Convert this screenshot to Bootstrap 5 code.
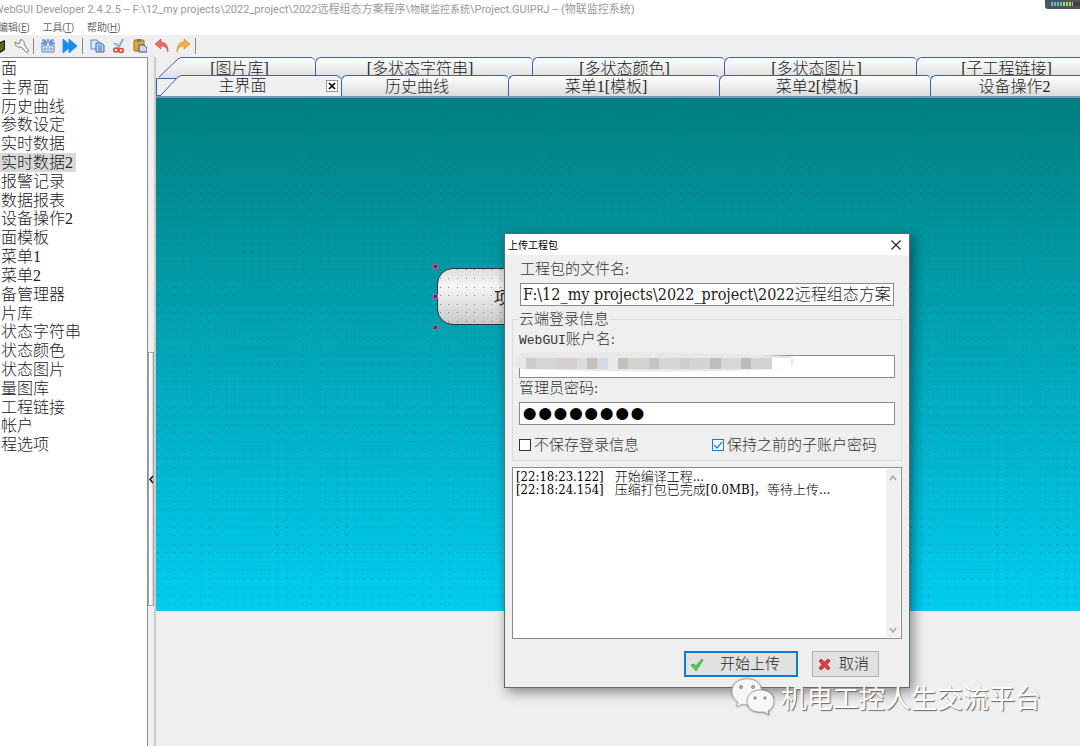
<!DOCTYPE html>
<html lang="zh-CN">
<head>
<meta charset="utf-8">
<meta name="viewport" content="width=device-width, initial-scale=1">
<title>WebGUI Developer 2.4.2.5</title>
<link href="https://cdn.jsdelivr.net/npm/bootstrap@5.3.0/dist/css/bootstrap.min.css" rel="stylesheet">
<style>
  :root { --song: "Liberation Serif", "Noto Sans CJK SC", serif; --face: #efefef; --edge: #3a62b4; }
  body { font: 300 16px/19px var(--song); color: #222; background: var(--face); overflow: hidden; }
  button { font: inherit; color: inherit; }
  .ui-text { font: 11px/16px "Open Sans", "Noto Sans CJK SC", sans-serif; }
  .title-line { height: 20px; color: #999; padding-top: 2px; margin-left: -6px; }
  .title-line h1 { font: 11px/16px Roboto, "Noto Sans CJK SC", sans-serif; }
  .title-line .sys { font-size: 10px; }
  .menu-line { height: 15px; gap: 13px; margin-left: -2px; }
  .menu-line a { color: #666; font-size: 10px; text-decoration: none; line-height: 15px; }
  .tool-line { height: 22px; padding-bottom: 1px; }
  .tool-line button, .plain-btn { border: 0; background: none; padding: 0; line-height: 0; }
  .tool-line .vr { height: 16px; align-self: center; background: #888; opacity: 1; }
  .tool-group { gap: 7px; margin: 0 5px 0 7px; }
  .meter { position: absolute; right: 0; top: 0; }

  .side { width: 148px; background: #fff; border-right: 1px solid #888d96; border-top: 1px solid #888d96; }
  .side ul { height: 396px; display: grid; grid-auto-rows: 1fr; padding: 1px 0 0 1px; }
  .side li { min-height: 0; }
  .side a { color: #222; text-decoration: none; display: block; width: fit-content; padding-right: 3px; line-height: 19px; }
  .side a.active { background: #d9d9d9; box-shadow: -1px 0 #d9d9d9; }
  .splitter { width: 8px; padding-top: 295px; border-right: 2px solid #ccc; }
  .grip { height: 254px; width: 6px; border: 1px solid #a5a5a5; background: linear-gradient(90deg, #fff 50%, #bcd8ee); }

  .tab-row { margin-right: -40px; }
  .tab-row button { position: relative; flex-shrink: 0; padding: 0; border: solid var(--edge); border-width: 1px 0 0 1px; border-radius: 6px 4px 0 0;
    background: linear-gradient(#fff, #dcdcdc); line-height: 21px; overflow: hidden; }
  .row-back { height: 18px; }
  .row-back button { height: 22px; }
  .row-front { height: 23px; position: relative; border-bottom: 2px solid #7a92bd; }
  .row-front button { height: 21px; line-height: 20px; padding-top: 1px; }
  .tab-row .slanted { border: 0; border-radius: 0; background: none; }
  .slanted svg { position: absolute; left: 0; top: 0; }
  .slanted span { position: relative; }
  .w-160 { width: 159px; } .w-217 { width: 217px; } .w-192 { width: 192px; } .w-185 { width: 185px; }
  .w-167 { width: 167px; } .w-211 { width: 211px; } .w-last { width: 184px; }
  .row-front .tab-x { position: absolute; left: 170px; top: 5px; height: 12px; padding: 0; }

  .stage { height: 513px; background: linear-gradient(#008080, #00cdf0); }
  .stage-btn { left: 281px; top: 170px; width: 160px; height: 57px; border: 1px solid #333; border-radius: 16px; padding: 3px 0 0 56px;
    text-align: left; background: linear-gradient(#dedede, #f6f6f6 30%, #c9c9c9); font-size: 17px; font-weight: 400; }
  .over { inset: 0; pointer-events: none; }

  .dlg { left: 504px; top: 233px; width: 406px; height: 455px; background: var(--face); border: 1px solid #5c6b6e;
    box-shadow: 3px 4px 12px rgba(0,0,0,.45); font-size: 15px; }
  .dlg-head { height: 21px; background: #fff; padding: 0 8px 0 3px; }
  .dlg-head h2 { font: 10px/20px "Noto Sans CJK SC", sans-serif; color: #000; }
  .dlg-body { padding: 4px 7px 3px; }
  .dlg label { line-height: 20px; color: #333; }
  .mono { font: 13px/20px "Liberation Mono", monospace; }
  .field { display: block; width: 100%; height: 23px; border: 1px solid #8a8a8a; border-radius: 0; background: #fff; padding: 0 2px; color: #222; }
  .field.path { font: 300 16px/18px "DejaVu Serif Condensed", "Noto Sans CJK SC", serif; padding-bottom: 4px; }
  .field.secret { font: 44px/20px "Liberation Sans", sans-serif; color: #000; }
  .group { border: 1px solid #dcdcdc; padding: 0 6px; height: 152px; margin-top: 3px; }
  .group legend { float: none; width: auto; margin: 0; padding: 0; font-size: 15px; line-height: 20px; color: #333; }
  .ticks { padding: 10px 18px 0 0; }
  .ticks span { gap: 3px; }
  .tick { appearance: none; width: 12px; height: 12px; border: 1px solid #333; background: #fff; margin: 0; }
  .tick:checked { border-color: #1879d0; background: #fff url("data:image/svg+xml,%3Csvg xmlns='http://www.w3.org/2000/svg' viewBox='0 0 10 10'%3E%3Cpath d='M1 5l3 3 5-6' fill='none' stroke='%231879d0' stroke-width='1.2'/%3E%3C/svg%3E"); }
  .log-wrap { border: 1px solid #8a8a8a; height: 172px; background: #fff; margin-top: 6px; padding: 1px; }
  .log-wrap textarea { border: 0; resize: none; overflow: hidden; outline: 0; padding: 1px 2px; color: #000;
    font: 300 13px/13px "DejaVu Serif Condensed", "Noto Sans CJK SC", serif; }
  .scroll-rail { width: 14px; background: #f0f0f0; padding: 6px 0 4px 3px; }
  .acts { gap: 14px; padding: 12px 23px 0 0; }
  .act { height: 26px; border: 1px solid #b0b0b0; background: #e1e1e1; padding: 0 9px 0 5px; }
  .act.main { border: 2px solid #0f7bd8; width: 114px; padding: 0 16px 0 4px; }
  .act.sub { width: 67px; }
  .cover { left: 7px; top: 117px; }

  .sign { left: 731px; top: 678px; color: #fff; font: 26px/38px "Noto Sans CJK SC", sans-serif; text-shadow: 1px 1px 1px #666; gap: 7px; }
  .sign svg { filter: drop-shadow(0 0 1px #777); }
</style>
</head>
<body class="position-relative">
<div class="d-flex flex-column min-vh-100">
  <header class="bg-white ui-text">
    <div class="title-line"><h1 class="m-0 text-nowrap">WebGUI Developer 2.4.2.5 -- F:\12_my projects\2022_project\2022远程组态方案程序\<span class="sys">物联监控系统</span>\Project.GUIPRJ -- (物联监控系统)</h1></div>
    <nav class="menu-line d-flex">
      <a href="#">编辑(<u>E</u>)</a><a href="#">工具(<u>T</u>)</a><a href="#">帮助(<u>H</u>)</a>
    </nav>
    <svg class="meter" width="35" height="10"><path d="M0 0h35v9H3q-3 0-3-3z" fill="#4b5262"/><path d="M6 4h13" stroke="#52c5b0" stroke-width="4" stroke-dasharray="2 1"/><path d="M18 4h10" stroke="#c3cf50" stroke-width="4" stroke-dasharray="2 1"/><path d="M28 4h7" stroke="#333a46" stroke-width="4" stroke-dasharray="2 1"/></svg>
  </header>

  <div class="tool-line d-flex align-items-center" role="toolbar">
    <button aria-label="书"><svg width="6" height="16"><path d="M0 4l5-2v10l-5 3z" fill="#1c1c08"/><path d="M1 5v8M3 4v8" stroke="#a6a43a"/></svg></button>
    <button class="ms-1 ps-1" aria-label="设置"><svg width="15" height="16"><path d="M1 4l3 2 2-1V2c3-1 5 2 4 4l4 6c1 2-1 3-2 2L7 9C4 10 1 8 1 4z" fill="#f4f4f4" stroke="#777"/></svg></button>
    <span class="vr ms-1"></span>
    <div class="tool-group d-flex">
      <button aria-label="编译"><svg width="14" height="16"><path d="M1 4h12v10H1z" fill="#e8f2fc" stroke="#5b86c0"/><path d="M1 11h12M1 8h12M4 9v5M7 9v5M10 9v5" stroke="#6b90c2" stroke-width=".8"/><path d="M1 2h3v3M13 2h-3v3M7 1v3M2 5l2 2 2-2M8 5l2 2 2-2" fill="none" stroke="#2d6fd0" stroke-width="1.200"/></svg></button>
      <button aria-label="运行"><svg width="15" height="16"><path d="M1 1l6 5V1l8 7-8 7v-5l-6 5z" fill="#1d8bea" stroke="#1d8bea" stroke-width=".8"/></svg></button>
    </div>
    <span class="vr"></span>
    <div class="tool-group d-flex">
      <button aria-label="复制"><svg width="15" height="16"><path d="M1 2h6l2 2v7H1z" fill="#dbe8fa" stroke="#5b83c8"/><path d="M6 5h5l3 2v7H6z" fill="#bcd4f5" stroke="#3b67b8"/><path d="M8 8h4M8 10h4M8 12h4" stroke="#4a74c0"/></svg></button>
      <button aria-label="剪切"><svg width="14" height="16"><path d="M2 5l6 4M11 1L6 11" stroke="#8cb0cc" stroke-width="2"/><ellipse cx="4" cy="12" rx="2.200" ry="2" fill="none" stroke="#d9453a" stroke-width="1.600"/><ellipse cx="9" cy="12.500" rx="2.200" ry="2" fill="none" stroke="#d9453a" stroke-width="1.600"/></svg></button>
      <button aria-label="粘贴"><svg width="14" height="16"><rect x="1" y="2" width="10" height="11" rx="1" fill="#e0a936" stroke="#94691c"/><path d="M4 1h4v3H4z" fill="#777"/><path d="M6 7h5l3 3v4H6z" fill="#c9d9ee" stroke="#3d5075"/></svg></button>
      <button aria-label="撤销"><svg width="15" height="16"><path d="M1 6l6-5v3c5 0 7 4 7 10-1-4-3-6-7-6v3z" fill="#ee6a66" stroke="#c9403f" stroke-width=".6"/></svg></button>
      <button aria-label="重做"><svg width="14" height="16"><path d="M14 6L8 1v3c-5 0-7 4-7 10 1-4 3-6 7-6v3z" fill="#f4b342" stroke="#c08325" stroke-width=".6"/></svg></button>
    </div>
    <span class="vr"></span>
  </div>

  <div class="d-flex flex-grow-1">
    <nav class="side flex-shrink-0">
      <ul class="list-unstyled m-0 text-nowrap">
        <li><a href="#">面</a></li><li><a href="#">主界面</a></li><li><a href="#">历史曲线</a></li><li><a href="#">参数设定</a></li>
        <li><a href="#">实时数据</a></li><li><a href="#" class="active">实时数据2</a></li><li><a href="#">报警记录</a></li><li><a href="#">数据报表</a></li>
        <li><a href="#">设备操作2</a></li><li><a href="#">面模板</a></li><li><a href="#">菜单1</a></li><li><a href="#">菜单2</a></li>
        <li><a href="#">备管理器</a></li><li><a href="#">片库</a></li><li><a href="#">状态字符串</a></li><li><a href="#">状态颜色</a></li>
        <li><a href="#">状态图片</a></li><li><a href="#">量图库</a></li><li><a href="#">工程链接</a></li><li><a href="#">帐户</a></li><li><a href="#">程选项</a></li>
      </ul>
    </nav>
    <div class="splitter flex-shrink-0"><div class="grip d-flex align-items-center"><svg width="5" height="9"><path d="M4 1L1 4.500 4 8" fill="none" stroke="#111" stroke-width="1.500"/></svg></div></div>

    <main class="flex-grow-1 overflow-hidden">
      <div class="tab-row row-back d-flex">
        <button class="slanted w-160"><svg width="159" height="22"><defs><linearGradient id="tabFill" x2="0" y2="1"><stop stop-color="#fff"/><stop offset="1" stop-color="#dcdcdc"/></linearGradient></defs><path d="M3 20L22 2l3-1.500h131l3 3V22H3z" fill="url(#tabFill)"/><path d="M3 20L22 2l3-1.500h131l3 3" fill="none" stroke="#3a62b4"/></svg><span class="ps-2">[图片库]</span></button>
        <button class="w-217 pe-2">[多状态字符串]</button><button class="w-192 pe-2">[多状态颜色]</button><button class="w-192 pe-2">[多状态图片]</button><button class="w-last pe-1">[子工程链接]</button>
      </div>
      <div class="tab-row row-front d-flex">
        <button class="slanted w-185"><svg width="185" height="22"><path d="M4 21L22 2l3-1.500h156l4 3V21z" fill="#f0f0f0"/><path d="M.5 21V3.500H20M4 21L22 2l3-1.500h156l4 3M.5 20.500H4" fill="none" stroke="#3a62b4"/></svg><span class="pe-2 me-1">主界面</span></button>
        <button class="w-167 pe-3">历史曲线</button><button class="w-211 pe-3">菜单1[模板]</button><button class="w-211 pe-3">菜单2[模板]</button><button class="w-last pe-3">设备操作2</button>
        <button class="tab-x slanted" aria-label="关闭"><svg width="12" height="12" class="position-static d-block"><rect x=".5" y=".5" width="11" height="11" fill="#fff" stroke="#999"/><path d="M3 3l6 6M9 3L3 9" stroke="#000" stroke-width="1.700"/></svg></button>
      </div>
      <div class="stage position-relative overflow-hidden">
        <button class="stage-btn position-absolute">项目</button>
        <svg class="over position-absolute" width="100%" height="100%">
          <defs><pattern id="dots" x="1" y="0" width="60" height="60" patternUnits="userSpaceOnUse">
            <g fill="none" stroke="#693c50" stroke-opacity=".65"><path id="dotRow" d="M0 .5h1M9 .5h1M17 .5h1M26 .5h1M34 .5h1M43 .5h1M51 .5h1"/>
            <use href="#dotRow" y="9"/><use href="#dotRow" y="17"/><use href="#dotRow" y="26"/><use href="#dotRow" y="34"/><use href="#dotRow" y="43"/><use href="#dotRow" y="51"/></g></pattern></defs>
          <rect width="100%" height="100%" fill="url(#dots)"/>
          <g fill="#31319a" stroke="#cf5a78"><rect x="277.500" y="166.500" width="4" height="4"/><rect x="277.500" y="196.500" width="4" height="4"/><rect x="277.500" y="227.500" width="4" height="4"/></g>
        </svg>
      </div>
    </main>
  </div>
</div>

<section class="dlg position-absolute" role="dialog" aria-labelledby="dlgTitle">
  <div class="dlg-head d-flex justify-content-between align-items-center">
    <h2 id="dlgTitle" class="m-0">上传工程包</h2>
    <button class="plain-btn" aria-label="关闭"><svg width="10" height="10"><path d="M.5.500l9 9M9.500.500l-9 9" stroke="#222" stroke-width="1.200"/></svg></button>
  </div>
  <form class="dlg-body" onsubmit="return false">
    <div class="px-2 pe-1 me-1">
      <label class="d-block" for="pkg">工程包的文件名:</label>
      <div class="mt-1"><input id="pkg" class="field path" value="F:\12_my projects\2022_project\2022远程组态方案程序\物联监控系统"></div>
    </div>
    <fieldset class="group">
      <legend>云端登录信息</legend>
      <label class="d-block" for="acct"><span class="mono">WebGUI</span>账户名:</label>
      <div class="mt-1"><input id="acct" class="field"></div>
      <label class="d-block" for="pwd">管理员密码:</label>
      <div class="mt-1"><input id="pwd" type="password" class="field secret" value="12345678"></div>
      <div class="ticks d-flex justify-content-between">
        <span class="d-flex align-items-center"><input class="tick" type="checkbox" id="nosave"><label for="nosave">不保存登录信息</label></span>
        <span class="d-flex align-items-center"><input class="tick" type="checkbox" id="keep" checked><label for="keep">保持之前的子账户密码</label></span>
      </div>
    </fieldset>
    <div class="log-wrap d-flex">
      <textarea class="flex-grow-1" readonly aria-label="日志">[22:18:23.122]   开始编译工程...
[22:18:24.154]   压缩打包已完成[0.0MB]，等待上传...</textarea>
      <div class="scroll-rail d-flex flex-column justify-content-between"><svg width="8" height="6"><path d="M1 5l3-4 3 4" fill="none" stroke="#aaa" stroke-width="1.500"/></svg><svg width="8" height="6"><path d="M1 1l3 4 3-4" fill="none" stroke="#aaa" stroke-width="1.500"/></svg></div>
    </div>
    <div class="acts d-flex justify-content-end">
      <button class="act main d-flex align-items-center justify-content-between"><svg width="14" height="13"><path d="M1 7l3-1 2 2 6-7 1 1-7 11z" fill="#54cf4c" stroke="#2f9a2e" stroke-width=".7"/></svg><span>开始上传</span></button>
      <button class="act sub d-flex align-items-center justify-content-between"><svg width="13" height="13"><path d="M1 3l2-2 3.500 3L10 1l2 2-3 3.500 3 3.500-2 2-3.500-3L3 12l-2-2 3-3.500z" fill="#dc4141" stroke="#ad2525" stroke-width=".8"/></svg><span>取消</span></button>
    </div>
  </form>
  <svg class="cover position-absolute" width="284" height="24">
    <path d="M8 2q120-3 270 3q6 3 2 10l-5 3q-120 5-266 0q-14-6-1-16z" fill="#e8e8e8"/>
    <g transform="translate(14 7)"><path d="M0 0h10v11H0z" fill="#cdccd0"/><path d="M10 0h20v11H10z" fill="#d5d5d3"/><path d="M30 0h21v11H30z" fill="#d3cfd1"/><path d="M51 0h10v11H51z" fill="#dbdbd9"/><path d="M61 0h10v11H61z" fill="#c4c0bb"/><path d="M71 0h11v11H71z" fill="#d5dae2"/><path d="M92 0h10v11H92z" fill="#c2bfbb"/><path d="M102 0h21v11h-21z" fill="#d2d2cf"/><path d="M123 0h10v11h-10z" fill="#c7c2c3"/><path d="M133 0h21v11h-21z" fill="#d5d6d8"/><path d="M154 0h10v11h-10z" fill="#cccfcb"/><path d="M164 0h20v11h-20z" fill="#d5d4d3"/><path d="M184 0h11v11h-11z" fill="#bebcc2"/><path d="M195 0h20v11h-20z" fill="#d6d7d8"/><path d="M215 0h10v11h-10z" fill="#beb8b7"/><path d="M225 0h21v11h-21z" fill="#d3d3d5"/><path d="M246 0h19v11h-19z" fill="#fff"/></g>
  </svg>
</section>

<div class="sign position-absolute d-flex align-items-center text-nowrap">
  <svg width="43" height="38"><path d="M16 1c20 0 19 26 0 26l-5-1-5 3 1-5C-4 16 1 1 16 1z" fill="#f7f7f7" stroke="#999" stroke-width=".5"/><path d="M29 12c17 0 17 17 8 21l1 4-5-3c-22 3-22-22-4-22z" fill="#f7f7f7" stroke="#888" stroke-width=".8"/><g fill="#bbb" stroke="#888"><circle cx="10" cy="9" r="1.500"/><circle cx="22" cy="9" r="1.500"/><circle cx="24" cy="20" r="1.200"/><circle cx="34" cy="20" r="1.200"/></g></svg>
  <span>机电工控人生交流平台</span>
</div>
<script src="https://cdn.jsdelivr.net/npm/bootstrap@5.3.0/dist/js/bootstrap.bundle.min.js"></script>
</body>
</html>
